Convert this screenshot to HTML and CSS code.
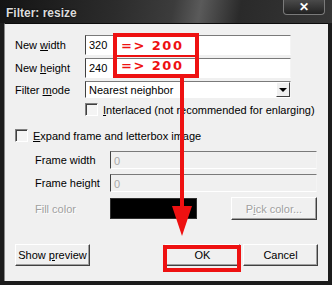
FILE: index.html
```
<!DOCTYPE html>
<html lang="en">
<head>
    <meta charset="UTF-8">
    <title>Filter: resize</title>
    <link rel="stylesheet" href="styles.css">
</head>
<body>
    <div class="window">
        <div class="titlebar">
            <span class="title">Filter: resize</span>
            <span class="close-btn">&#x2715;</span>
        </div>

        <div class="client">
            <div class="size-grid">
                <label class="lbl">New <u>w</u>idth</label>
                <div class="field">320</div>
                <label class="lbl">New <u>h</u>eight</label>
                <div class="field">240</div>
                <label class="lbl">Filter <u>m</u>ode</label>
                <div class="select">
                    <span>Nearest neighbor</span>
                    <span class="drop-btn"><span class="drop-arrow"></span></span>
                </div>
                <div class="check-row span2">
                    <span class="checkbox"></span>
                    <span><u>I</u>nterlaced (not recommended for enlarging)</span>
                </div>
            </div>

            <div class="check-row expand-row">
                <span class="checkbox"></span>
                <span><u>E</u>xpand frame and letterbox image</span>
            </div>

            <div class="frame-grid">
                <label class="lbl">Frame width</label>
                <div class="field disabled">0</div>
                <label class="lbl">Frame height</label>
                <div class="field disabled">0</div>
                <label class="lbl muted">Fill color</label>
                <div class="fill-row">
                    <span class="swatch"></span>
                    <span class="btn pick-btn"><span>P<u>i</u>ck color...</span></span>
                </div>
            </div>

            <div class="button-row">
                <span class="btn"><span>Show <u>p</u>review</span></span>
                <div class="button-group">
                    <span class="btn">OK</span>
                    <span class="btn">Cancel</span>
                </div>
            </div>
        </div>

        <!-- red annotations drawn on top of the screenshot -->
        <div class="note-box">
            <div class="note-line">=&gt; 200</div>
            <div class="note-line">=&gt; 200</div>
        </div>
        <svg class="note-arrow" width="30" height="165" viewBox="0 0 30 165">
            <rect x="8" y="0" width="4" height="132" fill="#ee1111"/>
            <polygon points="0,128 20,128 10,158" fill="#ee1111"/>
        </svg>
        <div class="ok-box"></div>
    </div>
</body>
</html>
```

FILE: styles.css
```
* {
    margin: 0;
    padding: 0;
    box-sizing: border-box;
}

body {
    font-family: 'Liberation Sans', Arial, sans-serif;
    font-size: 11px;
    color: #000;
    background: #fff;
}

.window {
    position: relative;
    width: 332px;
    height: 285px;
    background: #1c1c1c;
    display: flex;
    flex-direction: column;
    overflow: hidden;
}

.titlebar {
    height: 23px;
    display: flex;
    align-items: flex-start;
    justify-content: space-between;
    padding: 0 7px 0 6px;
    background: linear-gradient(100deg, #141414 0%, #2c2c2c 35%, #3c3c3c 52%, #5a5a5a 60%, #2a2a2a 72%, #363636 100%);
}

.title {
    margin-top: 6px;
    font-size: 12px;
    font-weight: bold;
    color: #dcdcdc;
    text-shadow: 0 0 2px #000;
}

.close-btn {
    width: 42px;
    height: 15px;
    display: flex;
    align-items: center;
    justify-content: center;
    background: linear-gradient(#4a4a4a, #222);
    border: 1px solid #7a7a7a;
    border-top: none;
    border-radius: 0 0 4px 4px;
    color: #fff;
    font-size: 12px;
    font-weight: bold;
}

.client {
    flex: 1;
    margin: 0 4px 4px 4px;
    background: #f0f0f0;
    border-top: 1px solid #0c0c0c;
    border-left: 1px solid #8a8a8a;
    padding: 11px 10px 0 10px;
}

.lbl {
    white-space: nowrap;
}

.muted,
.pick-btn {
    color: #a0a0a0;
    text-shadow: 1px 1px 0 #fff;
}

.size-grid {
    display: grid;
    grid-template-columns: 70px 206px;
    grid-template-rows: 20px 20px 17px 13px;
    row-gap: 3px;
    align-items: center;
}

.size-grid .check-row {
    margin-top: 4px;
}

.span2 {
    grid-column: 2;
}

.field {
    height: 100%;
    background: #fff;
    border: 1px solid;
    border-color: #7a7a7a #f4f4f4 #fff #404040;
    padding: 2px 3px;
    line-height: 14px;
}

.field.disabled {
    background: #f0f0f0;
    color: #a8a8a8;
}

.select {
    height: 17px;
    display: flex;
    align-items: center;
    justify-content: space-between;
    background: #fff;
    border: 1px solid;
    border-color: #7a7a7a #f4f4f4 #fff #404040;
    padding-left: 3px;
}

.drop-btn {
    width: 14px;
    height: 15px;
    background: #f0f0f0;
    border: 1px solid;
    border-color: #fff #404040 #404040 #fff;
    display: flex;
    align-items: center;
    justify-content: center;
}

.drop-arrow {
    width: 0;
    height: 0;
    border-left: 4px solid transparent;
    border-right: 4px solid transparent;
    border-top: 4px solid #000;
}

.check-row {
    display: flex;
    align-items: center;
    gap: 5px;
    height: 13px;
    white-space: nowrap;
}

.checkbox {
    width: 13px;
    height: 13px;
    flex-shrink: 0;
    background: #f4f4f4;
    border: 1px solid;
    border-color: #808080 #fff #fff #808080;
    box-shadow: inset 1px 1px 0 #404040;
}

.expand-row {
    margin-top: 15px;
}

.frame-grid {
    display: grid;
    grid-template-columns: 75px 207px;
    grid-template-rows: 18px 18px 23px;
    row-gap: 5px;
    align-items: center;
    margin: 9px 0 0 20px;
}

.fill-row {
    display: flex;
    align-items: center;
    justify-content: space-between;
    height: 23px;
}

.swatch {
    width: 87px;
    height: 21px;
    background: #000;
    border: 1px solid #303030;
}

.btn {
    display: flex;
    align-items: center;
    justify-content: center;
    height: 22px;
    width: 75px;
    background: #f0f0f0;
    border: 1px solid;
    border-color: #fff #404040 #404040 #fff;
    box-shadow: inset -1px -1px 0 #a0a0a0;
    white-space: nowrap;
}

.pick-btn {
    width: 86px;
    height: 23px;
}

.button-row {
    display: flex;
    justify-content: space-between;
    margin-top: 24px;
}

.button-group {
    display: flex;
    gap: 3px;
}

.note-box {
    position: absolute;
    left: 113px;
    top: 33px;
    width: 86px;
    height: 45px;
    border: 4px solid #ee1111;
    display: flex;
    flex-direction: column;
}

.note-line {
    flex: 1;
    padding-left: 4px;
    color: #ee1111;
    font-family: 'DejaVu Sans', sans-serif;
    font-weight: bold;
    font-size: 13px;
    letter-spacing: 1.5px;
    line-height: 17px;
}

.note-line:first-child {
    border-bottom: 2px solid #ee1111;
}

.note-arrow {
    position: absolute;
    left: 172px;
    top: 78px;
}

.ok-box {
    position: absolute;
    left: 163px;
    top: 245px;
    width: 78px;
    height: 27px;
    border: 4px solid #ee1111;
}
```
